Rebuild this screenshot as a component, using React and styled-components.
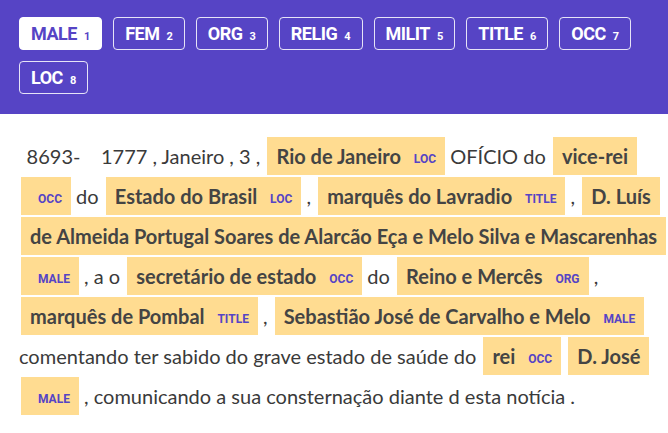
import React from 'react';
import styled, { createGlobalStyle } from 'styled-components';

const GlobalStyle = createGlobalStyle`
  body {
    margin: 0;
    background: #ffffff;
  }
`;

const Header = styled.div`
  background-color: #5644c5;
  padding: 17px 19px 20px;
  display: flex;
  flex-wrap: wrap;
  gap: 11px;
`;

const LabelButton = styled.button`
  display: flex;
  align-items: baseline;
  height: 33px;
  padding: 0 11px;
  border-radius: 4px;
  border: 1px solid ${(p) => (p.active ? '#ffffff' : 'rgba(255, 255, 255, 0.85)')};
  background: ${(p) => (p.active ? '#ffffff' : 'transparent')};
  color: ${(p) => (p.active ? '#5644c5' : '#ffffff')};
  font-family: Roboto, 'Liberation Sans', sans-serif;
  font-weight: 700;
  font-size: 18px;
  letter-spacing: -0.5px;
  line-height: 31px;
  cursor: pointer;
`;

const Key = styled.span`
  font-size: 11px;
  margin-left: 7px;
  letter-spacing: 0;
`;

const Body = styled.div`
  padding: 22px 1px 0 19px;
  font-family: Lato, 'Open Sans', sans-serif;
  font-size: 20px;
  line-height: 40px;
  color: #3a3a3a;
`;

const Plain = styled.span`
  white-space: pre-wrap;
`;

const Mark = styled.mark`
  background: #ffdc91;
  color: #444444;
  font-weight: 700;
  padding: 7px 9px;
  margin: 0 0 0 2px;
  line-height: 1;
  box-decoration-break: clone;
  -webkit-box-decoration-break: clone;
`;

const Tag = styled.span`
  font-family: Roboto, 'Liberation Sans', sans-serif;
  font-size: 12px;
  font-weight: 700;
  color: #5644c5;
  text-transform: uppercase;
  vertical-align: middle;
  margin-left: 8px;
  line-height: 1;
  white-space: nowrap;
`;

const labels = ['MALE', 'FEM', 'ORG', 'RELIG', 'MILIT', 'TITLE', 'OCC', 'LOC'];

const tokens = [
  '\u2009 8693-    1777 , Janeiro , 3 , ',
  { text: 'Rio de Janeiro', label: 'loc' },
  ' OFÍCIO do ',
  { text: 'vice-rei', label: 'occ' },
  ' do ',
  { text: 'Estado do Brasil', label: 'loc' },
  ' , ',
  { text: 'marquês do Lavradio', label: 'title' },
  ' , ',
  { text: 'D. Luís de Almeida Portugal Soares de Alarcão Eça e Melo Silva e Mascarenhas', label: 'male' },
  ' , a o ',
  { text: 'secretário de estado', label: 'occ' },
  ' do ',
  { text: 'Reino e Mercês', label: 'org' },
  ' , ',
  { text: 'marquês de Pombal', label: 'title' },
  ' , ',
  { text: 'Sebastião José de Carvalho e Melo', label: 'male' },
  ' comentando ter sabido do grave estado de saúde do ',
  { text: 'rei', label: 'occ' },
  ' ',
  { text: 'D. José', label: 'male' },
  ' , comunicando a sua consternação diante d esta notícia .',
];

export default function App() {
  return (
    <>
      <GlobalStyle />
      <Header>
        {labels.map((l, i) => (
          <LabelButton key={l} active={i === 0}>
            {l}
            <Key>{i + 1}</Key>
          </LabelButton>
        ))}
      </Header>
      <Body>
        {tokens.map((t, i) =>
          typeof t === 'string' ? (
            <Plain key={i}>{t}</Plain>
          ) : (
            <Mark key={i}>
              {t.text} <Tag>{t.label}</Tag>
            </Mark>
          )
        )}
      </Body>
    </>
  );
}
